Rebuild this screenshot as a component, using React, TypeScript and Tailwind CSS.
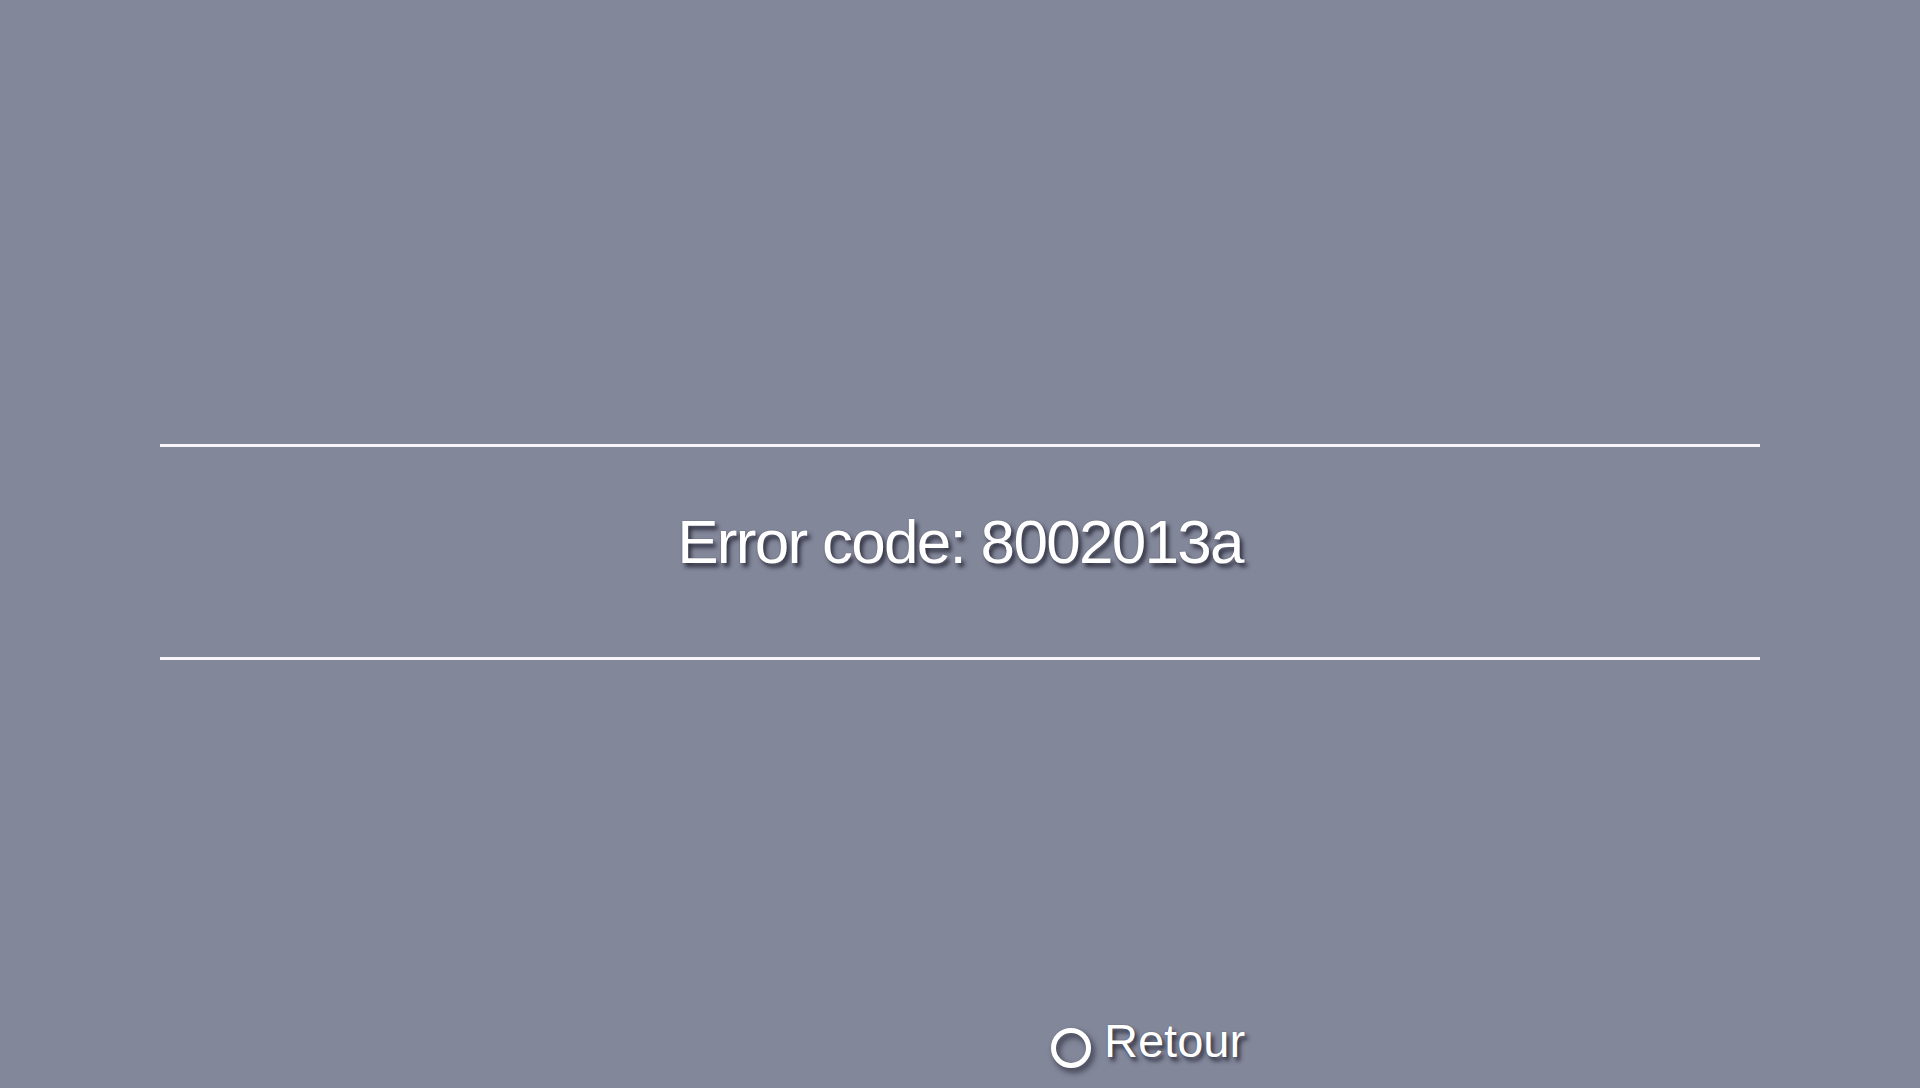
export default function App() {
  const shadow = '[text-shadow:0_0_1px_rgba(60,62,80,0.9),3px_4px_4px_rgba(20,22,35,0.75)]';
  return (
    <div className="w-full h-[1088px] bg-[#83879a] flex flex-col overflow-hidden font-['Liberation_Sans',Arial,sans-serif] text-white">
      {/* error box */}
      <div className="mt-[444px] mx-[160px] h-[216px] border-y-[3px] border-[#f6f6f8] pt-[64px]">
        <p className={`text-center text-[62px] leading-[62px] tracking-[-1.7px] ${shadow}`}>
          Error code: 8002013a
        </p>
      </div>

      {/* back button */}
      <div className="mt-[357px] pl-[1051px] flex items-start">
        <div className="mt-[11px] w-[40px] h-[40px] rounded-full border-[5px] border-white [filter:drop-shadow(3px_4px_3px_rgba(20,22,35,0.75))]" />
        <span className={`ml-[13px] text-[47px] leading-[47px] ${shadow}`}>Retour</span>
      </div>
    </div>
  );
}
